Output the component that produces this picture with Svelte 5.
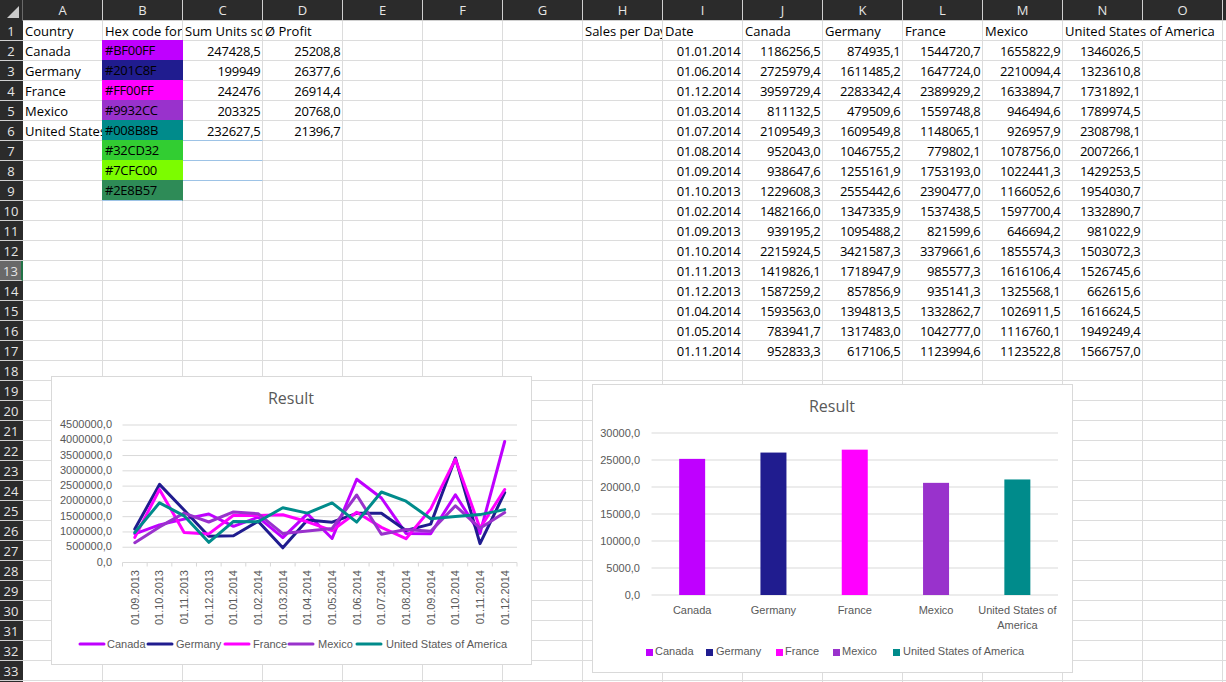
<script>
  const colLetters = 'ABCDEFGHIJKLMNO'.split('');
  const rowNumbers = Array.from({ length: 34 }, (_, i) => i + 1);
  const tableRows = [
    ['01.01.2014','1186256,5','874935,1','1544720,7','1655822,9','1346026,5'],
    ['01.06.2014','2725979,4','1611485,2','1647724,0','2210094,4','1323610,8'],
    ['01.12.2014','3959729,4','2283342,4','2389929,2','1633894,7','1731892,1'],
    ['01.03.2014','811132,5','479509,6','1559748,8','946494,6','1789974,5'],
    ['01.07.2014','2109549,3','1609549,8','1148065,1','926957,9','2308798,1'],
    ['01.08.2014','952043,0','1046755,2','779802,1','1078756,0','2007266,1'],
    ['01.09.2014','938647,6','1255161,9','1753193,0','1022441,3','1429253,5'],
    ['01.10.2013','1229608,3','2555442,6','2390477,0','1166052,6','1954030,7'],
    ['01.02.2014','1482166,0','1347335,9','1537438,5','1597700,4','1332890,7'],
    ['01.09.2013','939195,2','1095488,2','821599,6','646694,2','981022,9'],
    ['01.10.2014','2215924,5','3421587,3','3379661,6','1855574,3','1503072,3'],
    ['01.11.2013','1419826,1','1718947,9','985577,3','1616106,4','1526745,6'],
    ['01.12.2013','1587259,2','857856,9','935141,3','1325568,1','662615,6'],
    ['01.04.2014','1593563,0','1394813,5','1332862,7','1026911,5','1616624,5'],
    ['01.05.2014','783941,7','1317483,0','1042777,0','1116760,1','1949249,4'],
    ['01.11.2014','952833,3','617106,5','1123994,6','1123522,8','1566757,0'],
  ];
  const summary = [
    ['Canada', '#BF00FF', '247428,5', '25208,8'],
    ['Germany', '#201C8F', '199949', '26377,6'],
    ['France', '#FF00FF', '242476', '26914,4'],
    ['Mexico', '#9932CC', '203325', '20768,0'],
    ['United States of America', '#008B8B', '232627,5', '21396,7'],
    ['', '#32CD32', '', ''],
    ['', '#7CFC00', '', ''],
    ['', '#2E8B57', '', ''],
  ];
  const cells = {};
  const put = (r, c, t, cls = '', bg = '') => { cells[r + ':' + c] = { t, cls, bg }; };
  ['Country','Hex code for Country','Sum Units sold','Ø Profit'].forEach((t, c) => put(1, c, t));
  put(1, 7, 'Sales per Day');
  ['Date','Canada','Germany','France','Mexico'].forEach((t, i) => put(1, 8 + i, t));
  put(1, 13, 'United States of America', 'spill');
  summary.forEach((row, i) => {
    const r = i + 2;
    put(r, 0, row[0]);
    put(r, 1, row[1], 'swatch' + (i >= 4 ? ' blue' : ''), row[1]);
    put(r, 2, row[2], 'num' + (i >= 4 && i < 7 ? ' blue' : ''));
    put(r, 3, row[3], 'num');
  });
  tableRows.forEach((row, i) => row.forEach((t, j) => put(i + 2, 8 + j, t, 'num')));
  const cell = (r, c) => cells[r + ':' + c] || { t: '', cls: '', bg: '' };

  const num = (s) => parseFloat(s.replace(',', '.'));
  const order = ['01.09.2013','01.10.2013','01.11.2013','01.12.2013','01.01.2014','01.02.2014','01.03.2014','01.04.2014','01.05.2014','01.06.2014','01.07.2014','01.08.2014','01.09.2014','01.10.2014','01.11.2014','01.12.2014'];
  const sorted = order.map((d) => tableRows.find((r) => r[0] === d));
  const series = [
    ['Canada', '#BF00FF', 80, 107],
    ['Germany', '#201C8F', 148, 176],
    ['France', '#FF00FF', 225, 253],
    ['Mexico', '#9932CC', 289, 318],
    ['United States of America', '#008B8B', 357, 386],
  ].map(([name, color, keyX, labelX], i) => ({ name, color, keyX: keyX - 51, labelX: labelX - 51, values: sorted.map((r) => num(r[i + 1])) }));

  // line chart geometry, in the chart's own coordinates
  const L = { x0: 71.5, x1: 466, top: 49, bottom: 186.5 };
  const step = (L.x1 - L.x0) / 16;
  const ly = (v) => L.bottom - (v / 4500000) * (L.bottom - L.top);
  const lx = (i) => L.x0 + step * (i + 0.5);
  const lTicks = Array.from({ length: 10 }, (_, i) => i * 500000);
  const pts = (values) => values.map((v, i) => `${lx(i).toFixed(1)},${ly(v).toFixed(1)}`).join(' ');

  // bar chart geometry
  const B = { x0: 59.5, x1: 466, top: 49, bottom: 211 };
  const bStep = (B.x1 - B.x0) / 5;
  const by = (v) => B.bottom - (v / 30000) * (B.bottom - B.top);
  const bx = (i) => B.x0 + bStep * (i + 0.5);
  const bTicks = [0, 5000, 10000, 15000, 20000, 25000, 30000];
  const bars = [
    ['Canada', '#BF00FF', 25208.8, 646, 655],
    ['Germany', '#201C8F', 26377.6, 706, 716],
    ['France', '#FF00FF', 26914.4, 776, 785],
    ['Mexico', '#9932CC', 20768.0, 833, 842],
    ['United States of America', '#008B8B', 21396.7, 893, 903],
  ].map(([name, color, value, keyX, labelX]) => ({ name, color, value, keyX: keyX - 592, labelX: labelX - 592 }));
</script>

<div class="app">
  <div class="sheet">
    <div class="corner">
      <svg width="22" height="20" viewBox="0 0 22 20"><polygon points="19,6 19,18 7,18" fill="#c9c9c9" /></svg>
    </div>
    {#each colLetters as letter}
      <div class="colhead">{letter}</div>
    {/each}
    <div class="colhead"></div>

    {#each rowNumbers as r}
      <div class="rowhead" class:active={r === 13}>{r}</div>
      {#each colLetters as _, c}
        {@const it = cell(r, c)}
        <div class="cell {it.cls}" style={it.bg ? `--fill:${it.bg}` : undefined}>{it.t}</div>
      {/each}
      <div class="cell"></div>
    {/each}
  </div>

  <svg class="chart line-chart" width="481" height="289" viewBox="0 0 481 289">
    <rect x="0.5" y="0.5" width="480" height="288" fill="#fff" stroke="#d9d9d9" />
    <text x="240" y="28" class="title" text-anchor="middle">Result</text>
    {#each lTicks as t}
      <line x1={L.x0} x2={L.x1} y1={ly(t)} y2={ly(t)} stroke="#d9d9d9" />
      <text x="61" y={ly(t) + 3} class="axis" text-anchor="end">{t},0</text>
    {/each}
    {#each Array(17) as _, i}
      <line x1={L.x0 + step * i} x2={L.x0 + step * i} y1={L.bottom} y2={L.bottom + 4} stroke="#d9d9d9" />
    {/each}
    {#each order as d, i}
      <text class="axis" text-anchor="end" transform="translate({lx(i) + 4} 194) rotate(-90)">{d}</text>
    {/each}
    {#each series as s}
      <polyline points={pts(s.values)} fill="none" stroke={s.color} stroke-width="3" stroke-linejoin="round" stroke-linecap="round" />
    {/each}
    {#each series as s}
      <line x1={s.keyX} x2={s.keyX + 24} y1="268" y2="268" stroke={s.color} stroke-width="3" stroke-linecap="round" />
      <text x={s.labelX} y="272" class="axis">{s.name}</text>
    {/each}
  </svg>

  <svg class="chart bar-chart" width="481" height="289" viewBox="0 0 481 289">
    <rect x="0.5" y="0.5" width="480" height="288" fill="#fff" stroke="#d9d9d9" />
    <text x="240" y="28" class="title" text-anchor="middle">Result</text>
    {#each bTicks as t}
      <line x1={B.x0} x2={B.x1} y1={by(t)} y2={by(t)} stroke="#d9d9d9" />
      <text x="48" y={by(t) + 3.5} class="axis" text-anchor="end">{t},0</text>
    {/each}
    {#each bars as b, i}
      <rect x={bx(i) - 13} y={by(b.value)} width="26" height={B.bottom - by(b.value)} fill={b.color} />
      {#if i < 4}
        <text x={bx(i)} y="230" class="axis" text-anchor="middle">{b.name}</text>
      {:else}
        <text x={bx(i)} y="230" class="axis" text-anchor="middle">United States of</text>
        <text x={bx(i)} y="245" class="axis" text-anchor="middle">America</text>
      {/if}
      <rect x={b.keyX} y="265" width="7" height="7" fill={b.color} />
      <text x={b.labelX} y="271" class="axis">{b.name}</text>
    {/each}
  </svg>
</div>

<style>
  :global(body) {
    margin: 0;
    background: #fff;
  }
  .app {
    position: relative;
    width: 1226px;
    height: 682px;
    overflow: hidden;
    font-family: "Open Sans", "Noto Sans", sans-serif;
  }
  .sheet {
    display: grid;
    grid-template-columns: 23px repeat(15, 80px) 4px;
    grid-auto-rows: 20px;
    grid-template-rows: 21px;
  }
  .corner {
    background: #2b2b2b;
    border-right: 1px solid #6a6a6a;
    box-sizing: border-box;
    line-height: 0;
  }
  .colhead {
    box-sizing: border-box;
    background: #2b2b2b;
    color: #e6e6e6;
    font-size: 13px;
    line-height: 20px;
    text-align: center;
    border-right: 1px solid #d0d0d0;
    border-bottom: 1px solid #d0d0d0;
  }
  .rowhead {
    box-sizing: border-box;
    background: #2b2b2b;
    color: #e6e6e6;
    font-size: 13px;
    line-height: 21px;
    text-align: center;
    border-bottom: 1px solid #d0d0d0;
    padding-right: 1px;
  }
  .rowhead.active {
    background: #696969;
    border-right: 2px solid #217346;
    padding-right: 0;
  }
  .cell {
    box-sizing: border-box;
    min-width: 0;
    padding: 0 1px 0 2px;
    font-size: 13px;
    line-height: 20px;
    color: #000;
    white-space: nowrap;
    overflow: hidden;
    border-right: 1px solid #dcdcdc;
    border-bottom: 1px solid #dcdcdc;
  }
  .cell.num {
    text-align: right;
    letter-spacing: -0.25px;
    padding-right: 1.5px;
  }
  .cell.spill {
    overflow: visible;
    border-right-color: transparent;
  }
  .cell.swatch {
    margin: -1px 0 0 -1px;
    padding-left: 3px;
    line-height: 21px;
    letter-spacing: -0.25px;
    background: var(--fill);
    border-color: var(--fill);
  }
  .cell.blue {
    border-bottom-color: #9dc3e6;
  }
  .chart {
    position: absolute;
    display: block;
  }
  .line-chart {
    left: 51px;
    top: 376px;
  }
  .bar-chart {
    left: 592px;
    top: 384px;
  }
  .title {
    font-family: "Open Sans", "Noto Sans", sans-serif;
    font-size: 16px;
    fill: #595959;
  }
  .axis {
    font-family: "Liberation Sans", Arial, sans-serif;
    font-size: 11px;
    fill: #595959;
  }
</style>
